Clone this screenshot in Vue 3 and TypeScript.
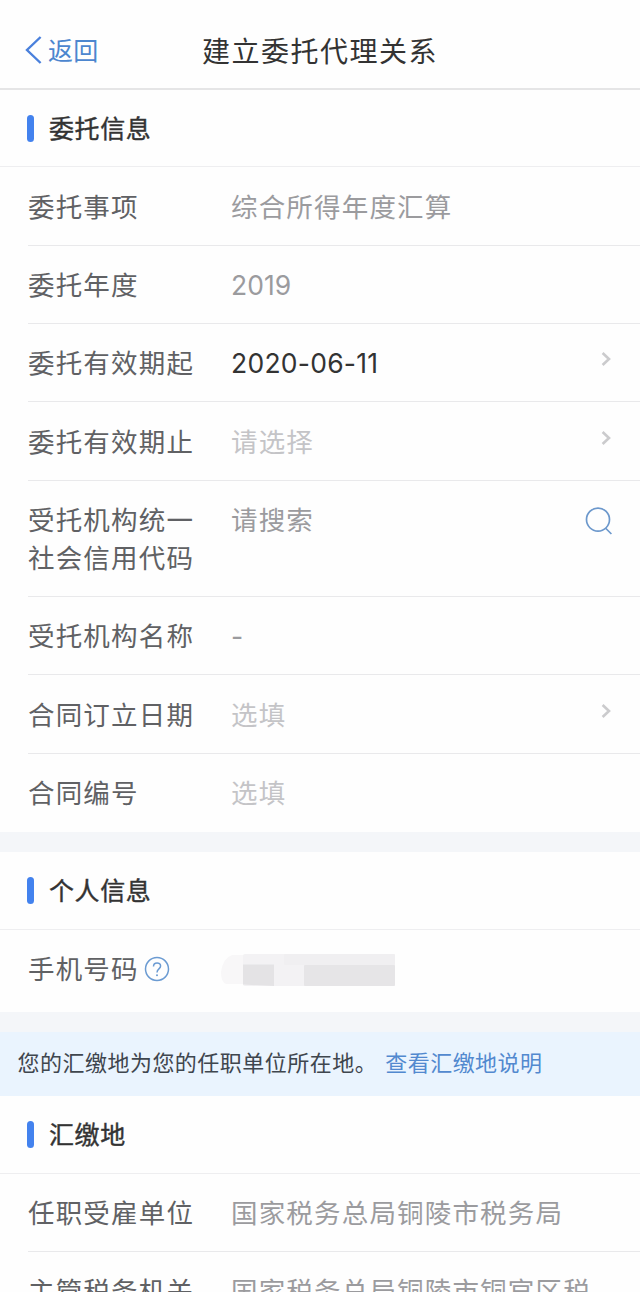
<script setup lang="ts">
interface Field {
  label: string
  value: string
  tone: 'filled' | 'muted' | 'placeholder'
  icon?: 'chevron' | 'search'
  tall?: boolean
  numeric?: boolean
}

const entrust: Field[] = [
  { label: '委托事项', value: '综合所得年度汇算', tone: 'muted' },
  { label: '委托年度', value: '2019', tone: 'muted', numeric: true },
  { label: '委托有效期起', value: '2020-06-11', tone: 'filled', icon: 'chevron' },
  { label: '委托有效期止', value: '请选择', tone: 'placeholder', icon: 'chevron' },
  { label: '受托机构统一社会信用代码', value: '请搜索', tone: 'muted', icon: 'search', tall: true },
  { label: '受托机构名称', value: '-', tone: 'muted' },
  { label: '合同订立日期', value: '选填', tone: 'placeholder', icon: 'chevron' },
  { label: '合同编号', value: '选填', tone: 'placeholder' },
]

const place: Field[] = [
  { label: '任职受雇单位', value: '国家税务总局铜陵市税务局', tone: 'muted' },
  { label: '主管税务机关', value: '国家税务总局铜陵市铜官区税', tone: 'muted' },
]
</script>

<template>
  <div class="page">
    <header class="nav">
      <a class="back">
        <svg width="17" height="30" viewBox="0 0 17 30"><path d="M15.6 2 L2 15 L15.6 28" /></svg>
        <span>返回</span>
      </a>
      <h1>建立委托代理关系</h1>
    </header>

    <section>
      <h2 class="first"><i></i><span>委托信息</span></h2>
      <div v-for="f in entrust" :key="f.label" class="row" :class="{ tall: f.tall }">
        <span class="label">{{ f.label }}</span>
        <span class="value" :class="[f.tone, { numeric: f.numeric }]">{{ f.value }}</span>
        <svg v-if="f.icon === 'chevron'" class="chevron" width="12" height="16" viewBox="0 0 12 16">
          <path d="M2.6 2 L9 8 L2.6 14" />
        </svg>
        <svg v-if="f.icon === 'search'" class="search" width="30" height="30" viewBox="0 0 30 30">
          <circle cx="14" cy="13.6" r="11.5" />
          <path d="M21.4 22 L27.4 28" />
        </svg>
      </div>
    </section>

    <div class="gap"></div>

    <section>
      <h2><i></i><span>个人信息</span></h2>
      <div class="row phone">
        <span class="label">手机号码</span>
        <svg class="help" width="26" height="26" viewBox="0 0 26 26">
          <circle cx="13" cy="13" r="11.5" />
          <path d="M9.5 10.400 C9.5 5.8 16.6 5.8 16.6 10 C16.6 13 13 12.8 13 16.4" />
          <circle class="dot" cx="13" cy="19.2" r="1" />
        </svg>
        <svg class="mask" width="178" height="36" viewBox="0 0 178 36">
          <path fill="#f8f7f8" d="M12 3 H24 V32 H6 Q1 30 1 20 Q3 6 12 3Z" />
          <rect fill="#f3f2f4" x="23" y="2" width="152" height="32" rx="2" />
          <path fill="#e4e3e5" d="M23 12.500H54V34L23 32.500Z" />
          <rect fill="#e6e5e7" x="84" y="13" width="91" height="21" rx="1" />
          <rect fill="#f0eff1" x="64" y="2" width="111" height="11" rx="1" />
        </svg>
      </div>
    </section>

    <div class="gap second"></div>
    <p class="notice">您的汇缴地为您的任职单位所在地。<a>查看汇缴地说明</a></p>

    <section>
      <h2><i></i><span>汇缴地</span></h2>
      <div v-for="f in place" :key="f.label" class="row">
        <span class="label">{{ f.label }}</span>
        <span class="value" :class="f.tone">{{ f.value }}</span>
      </div>
    </section>
  </div>
</template>

<style>
body { margin: 0; overflow: hidden; background: #fefefe; }
</style>

<style scoped>
.page {
  box-sizing: border-box;
  width: 640px;
  height: 1292px;
  overflow: hidden;
  background: #fefefe;
  font-family: Inter, "Noto Sans CJK SC", sans-serif;
  color: #333;
}
svg { display: block; flex: none; fill: none; }
.nav {
  box-sizing: border-box;
  height: 90px;
  padding: 12px 0 0 25px;
  display: grid;
  grid-template-columns: 177px 1fr;
  align-items: center;
  border-bottom: 2px solid #e5e5e6;
}
.back { display: flex; align-items: center; color: #4c86cf; font-size: 25px; letter-spacing: 0.2px; }
.back svg { stroke: #4a80dc; stroke-width: 2.4; margin-right: 6px; }
.back span { margin-top: -2px; }
h1 { margin: 0; padding-top: 3px; font-size: 28px; font-weight: 400; letter-spacing: 1.500px; line-height: 40px; white-space: nowrap; }
h2 {
  box-sizing: border-box;
  margin: 0;
  height: 78px;
  padding-left: 27px;
  display: flex;
  align-items: center;
  border-bottom: 1px solid #eeeef0;
  font-size: 25px;
  font-weight: 400;
  letter-spacing: 0.600px;
  -webkit-text-stroke: 0.400px #333;
}
.first { height: 77.200px; }
h2 i { width: 7px; height: 27px; border-radius: 3.500px; background: #4382ee; margin-right: 15px; }
h2 span { margin-top: -2px; }
.row {
  box-sizing: border-box;
  height: 78.400px;
  margin-left: 28px;
  padding: 20.500px 28px 0 0;
  display: flex;
  align-items: flex-start;
  border-bottom: 1px solid #e9e9eb;
  font-size: 26.500px;
  letter-spacing: 1.180px;
  line-height: 38px;
  white-space: nowrap;
}
.row:last-child { border-bottom-color: transparent; }
.tall { height: 116.200px; }
.label { width: 168px; margin-right: 35px; flex: none; white-space: normal; color: #606164; }
.value { flex: 1; min-width: 0; }
.muted { color: #9b9b9e; }
.filled { color: #333; letter-spacing: 0.250px; }
.numeric { letter-spacing: 0; }
.placeholder { color: #c4c4c7; }
.chevron { stroke: #cbcbcd; stroke-width: 2.600; margin-top: 7px; }
.search { stroke: #6c98cc; stroke-width: 1.700; margin: 5px -2px 0 0; }
.phone .label { width: 116px; margin-right: 0; }
.help { stroke: #6b9bd2; stroke-width: 1.500; margin-top: 6px; }
.help .dot { fill: #6b9bd2; stroke: none; }
.mask { margin: 1.500px 0 0 50px; }
.gap { height: 19.500px; background: #f4f6f9; }
.second { margin-top: 4px; }
.notice {
  box-sizing: border-box;
  margin: 0;
  height: 64px;
  padding-left: 17.500px;
  background: #eaf4fe;
  color: #3f464e;
  font-size: 22px;
  letter-spacing: 0.480px;
  line-height: 63px;
  white-space: nowrap;
}
.notice a { color: #5289cf; margin-left: 8px; }
</style>
